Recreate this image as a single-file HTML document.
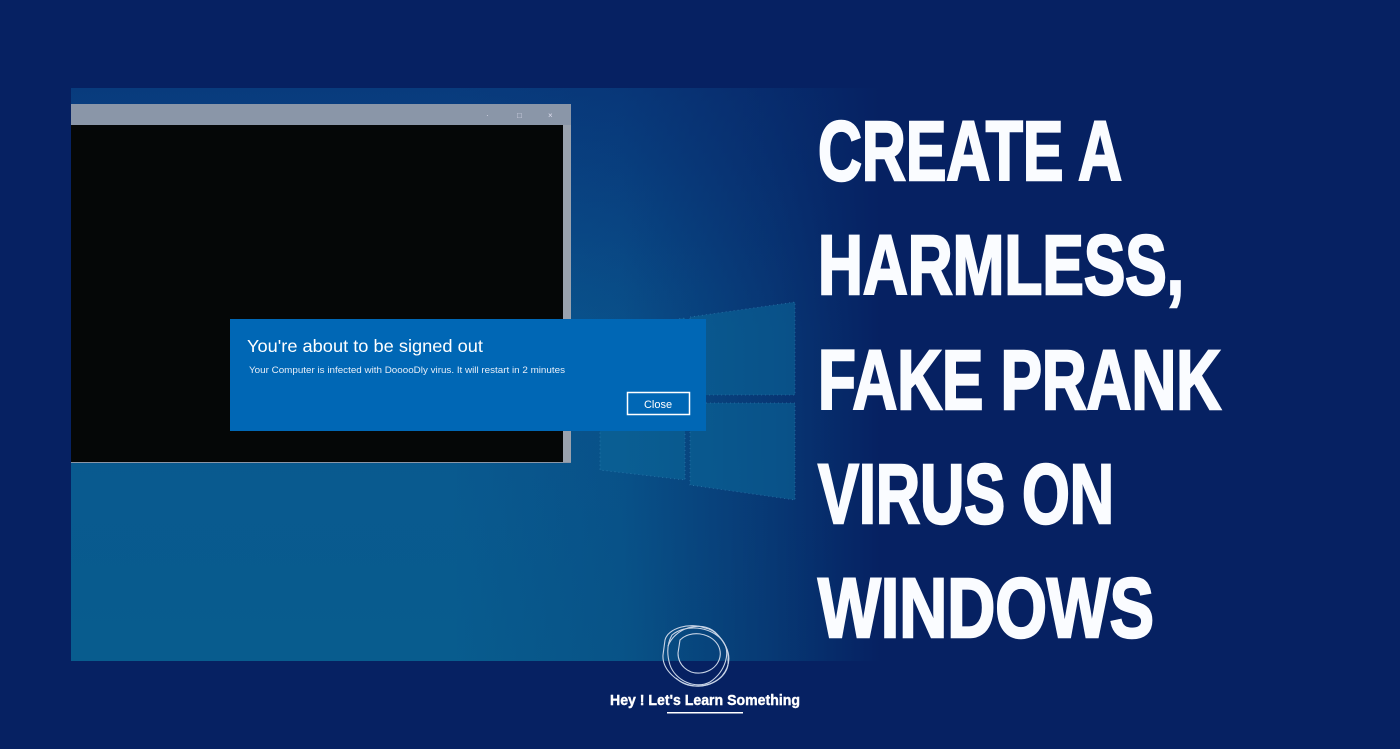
<!DOCTYPE html>
<html><head><meta charset="utf-8"><style>
html,body{margin:0;padding:0;width:1400px;height:749px;overflow:hidden;background:#062162;}
</style></head><body>
<svg width="1400" height="749" viewBox="0 0 1400 749" xmlns="http://www.w3.org/2000/svg" style="position:absolute;left:0;top:0">
<defs>
<linearGradient id="v" x1="0" y1="88" x2="0" y2="661" gradientUnits="userSpaceOnUse">
<stop offset="0" stop-color="#0b4c8a"/>
<stop offset="0.35" stop-color="#0a5790"/>
<stop offset="1" stop-color="#085c8e"/>
</linearGradient>
<linearGradient id="fade" x1="450" y1="0" x2="880" y2="0" gradientUnits="userSpaceOnUse">
<stop offset="0" stop-color="#062162" stop-opacity="0"/>
<stop offset="0.4" stop-color="#062162" stop-opacity="0.15"/>
<stop offset="0.75" stop-color="#062162" stop-opacity="0.6"/>
<stop offset="1" stop-color="#062162" stop-opacity="1"/>
</linearGradient>
<linearGradient id="topdark" x1="0" y1="88" x2="0" y2="330" gradientUnits="userSpaceOnUse">
<stop offset="0" stop-color="#062a70" stop-opacity="0.5"/>
<stop offset="1" stop-color="#062a70" stop-opacity="0"/>
</linearGradient>
</defs>
<rect x="0" y="0" width="1400" height="749" fill="#062162"/>
<rect x="71" y="88" width="830" height="573" fill="url(#v)"/>
<rect x="71" y="88" width="830" height="573" fill="url(#topdark)"/>
<rect x="71" y="88" width="830" height="573" fill="url(#fade)"/>
<!-- windows logo panes -->
<g fill="#0b6a9c" opacity="0.55" stroke="#4a9ccc" stroke-width="0.8" stroke-dasharray="1 3">
<polygon points="600,330 685,318 685,395 600,398"/>
<polygon points="690,317 795,302 795,395 690,395"/>
<polygon points="600,403 685,403 685,480 600,470"/>
<polygon points="690,403 795,403 795,500 690,485"/>
</g>
<!-- window -->
<rect x="71" y="104" width="500" height="359" fill="#8a96a8"/>
<rect x="71" y="125" width="492" height="337" fill="#050707"/>
<rect x="563" y="125" width="8" height="337" fill="#9aa2ae"/>
<text x="486" y="118" fill="#dde" font-size="8" font-family="Liberation Sans">·</text>
<text x="517" y="118" fill="#dde" font-size="8" font-family="Liberation Sans">□</text>
<text x="548" y="118" fill="#dde" font-size="8" font-family="Liberation Sans">×</text>
<!-- dialog -->
<rect x="230" y="319" width="476" height="112" fill="#0067b5"/>
<text x="247" y="352" fill="#fff" font-size="17.5" font-family="Liberation Sans" textLength="236" lengthAdjust="spacingAndGlyphs">You're about to be signed out</text>
<text x="249" y="373" fill="#e6eef8" font-size="9" font-family="Liberation Sans" textLength="316" lengthAdjust="spacingAndGlyphs">Your Computer is infected with DooooDly virus. It will restart in 2 minutes</text>
<rect x="627.5" y="392.5" width="62" height="22" fill="none" stroke="#fff" stroke-width="1.5"/>
<text x="658" y="408" fill="#fff" font-size="11" font-family="Liberation Sans" text-anchor="middle">Close</text>
<!-- title -->
<g fill="#fafcff" stroke="#fafcff" stroke-width="2.5" stroke-linejoin="miter" font-family="'Liberation Sans Narrow','Liberation Sans',sans-serif" font-weight="bold" font-size="84">
<text x="818" y="180" textLength="304" lengthAdjust="spacingAndGlyphs">CREATE A</text>
<text x="818" y="294" textLength="366" lengthAdjust="spacingAndGlyphs">HARMLESS,</text>
<text x="818" y="409" textLength="403" lengthAdjust="spacingAndGlyphs">FAKE PRANK</text>
<text x="818" y="523" textLength="296" lengthAdjust="spacingAndGlyphs">VIRUS ON</text>
<text x="818" y="637" textLength="336" lengthAdjust="spacingAndGlyphs">WINDOWS</text>
</g>
<!-- logo -->
<g fill="none" stroke="#c8d4e6" stroke-width="1.1">
<path d="M665,640 C668,628 690,622 705,628 C718,630 730,648 728,660 C730,675 712,688 695,686 C678,684 662,670 663,655 Z"/>
<path d="M672,635 C685,624 710,626 722,640 C732,652 725,672 710,682 C695,690 675,680 670,665 C666,652 668,642 672,635 Z"/>
<path d="M680,640 C690,630 710,632 718,645 C725,658 715,672 700,673 C688,674 678,665 678,653 Z"/>
<path d="M668,646 C675,628 700,620 715,632 C728,645 735,660 722,676 C710,688 688,690 676,678"/>
</g>
<text x="705" y="705" fill="#fff" stroke="#fff" stroke-width="0.4" font-size="15" font-weight="bold" font-family="'Liberation Sans Narrow','Liberation Sans',sans-serif" text-anchor="middle" textLength="190" lengthAdjust="spacingAndGlyphs">Hey ! Let's Learn Something</text>
<rect x="667" y="712" width="76" height="1.5" fill="#fff"/>
</svg>
</body></html>
